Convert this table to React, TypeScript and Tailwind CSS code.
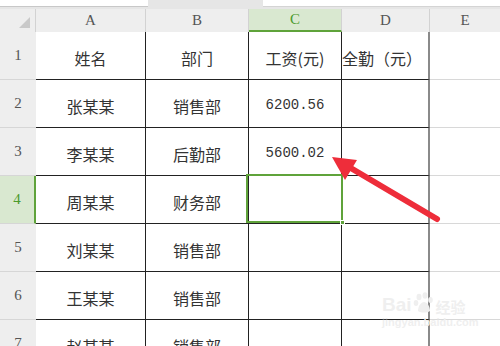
import React from 'react';

const CJK = "font-['Noto_Sans_CJK_SC',sans-serif]";
const SERIF = "font-['Liberation_Serif','Noto_Sans_CJK_SC',serif]";

type Col = { key: string; w: string; line: string };

const COLS: Col[] = [
  { key: 'A', w: 'w-[110px]', line: 'border-r border-[#222]' },
  { key: 'B', w: 'w-[103px]', line: 'border-r border-[#222]' },
  { key: 'C', w: 'w-[93px]', line: 'border-r border-[#222]' },
  { key: 'D', w: 'w-[88px]', line: 'border-r-2 border-r-[#8a8a8a]' },
];

const ROWS: { n: number; cells: string[] }[] = [
  { n: 1, cells: ['姓名', '部门', '工资(元)', '全勤（元）'] },
  { n: 2, cells: ['张某某', '销售部', '6200.56', ''] },
  { n: 3, cells: ['李某某', '后勤部', '5600.02', ''] },
  { n: 4, cells: ['周某某', '财务部', '', ''] },
  { n: 5, cells: ['刘某某', '销售部', '', ''] },
  { n: 6, cells: ['王某某', '销售部', '', ''] },
  { n: 7, cells: ['赵某某', '销售部', '', ''] },
];

function isNumber(s: string) {
  return /^[0-9.]+$/.test(s);
}

export default function App() {
  return (
    <div className="relative h-[346px] w-[500px] overflow-hidden bg-white">
      {/* formula bar remnant */}
      <div className="flex h-[9px] bg-[#e6e6e6]">
        <div className="h-[7px] w-[148px] border-b border-[#c8c8c8] bg-white" />
        <div className="w-[115px]" />
        <div className="h-[7px] flex-1 border-b border-[#d4d4d4] bg-white" />
      </div>

      {/* column headers */}
      <div className={`flex h-[23px] bg-[#eeeeee] text-[15px] text-[#555] ${SERIF}`}>
        <div className="relative w-[36px] border-r border-[#d2d2d2]">
          <svg className="absolute left-[19px] top-[8px]" width="11" height="11" viewBox="0 0 11 11">
            <polygon points="11,0 11,11 0,11" fill="#c9c9c9" />
          </svg>
        </div>
        {COLS.map((c) => (
          <div
            key={c.key}
            className={`${c.w} flex items-center justify-center border-r border-[#d2d2d2] ${
              c.key === 'C'
                ? 'border-b-2 border-b-[#5fa33a] bg-[#d9e8d0] text-[#4b9a2c]'
                : ''
            }`}
          >
            {c.key}
          </div>
        ))}
        <div className="flex w-[70px] items-center justify-center">E</div>
      </div>

      {/* rows */}
      {ROWS.map((r) => (
        <div key={r.n} className="flex h-[48px]">
          <div
            className={`flex w-[36px] items-center justify-center border-b border-[#d6d6d6] text-[15px] ${SERIF} ${
              r.n === 4
                ? 'border-r-2 border-r-[#5fa33a] bg-[#d9e8d0] text-[#4b9a2c]'
                : 'bg-[#eeeeee] text-[#555]'
            }`}
          >
            {r.n}
          </div>
          {COLS.map((c, i) => {
            const v = r.cells[i];
            return (
              <div
                key={c.key}
                className={`${c.w} ${c.line} flex items-center justify-center whitespace-nowrap border-b border-b-[#222] pt-[4px] text-[#333] ${
                  isNumber(v)
                    ? "font-['Liberation_Mono',monospace] text-[14px]"
                    : `${CJK} text-[16px]`
                } ${c.key === 'D' && v ? 'justify-start' : ''}`}
              >
                {v}
              </div>
            );
          })}
          <div className="flex-1 border-b border-[#d8d8d8]" />
        </div>
      ))}

      {/* active cell C4 */}
      <div className="absolute left-[246px] top-[174px] h-[49px] w-[97px] border-2 border-[#5fa33a]" />
      <div className="absolute left-[340px] top-[220px] h-[5px] w-[5px] border border-white bg-[#5fa33a]" />

      {/* annotation arrow */}
      <svg className="absolute left-0 top-0" width="500" height="346" viewBox="0 0 500 346">
        <line x1="437" y1="219" x2="349" y2="167" stroke="#ee2d3a" strokeWidth="6" strokeLinecap="round" />
        <polygon points="332,157 357,160 345,180" fill="#ee2d3a" />
      </svg>

      {/* watermark */}
      <div className="absolute left-[382px] top-[292px] flex flex-col text-[#efefef]">
        <div className="flex items-end gap-[1px] leading-none">
          <span className="font-['Liberation_Sans',sans-serif] text-[19px] font-bold">Bai</span>
          <svg width="22" height="22" viewBox="0 0 22 22">
            <g fill="#efefef">
              <ellipse cx="6" cy="5" rx="2.5" ry="3.2" />
              <ellipse cx="12" cy="3.5" rx="2.5" ry="3.2" />
              <ellipse cx="17.5" cy="8" rx="2.3" ry="3" />
              <ellipse cx="3" cy="11" rx="2.3" ry="3" />
              <path d="M5 19 C5 13 9 10 11 10 C14 10 17 14 17 19 C14 21 8 21 5 19 Z" />
            </g>
          </svg>
          <span className={`${CJK} text-[15px] font-bold`}>经验</span>
        </div>
        <div className="mt-[3px] font-['Liberation_Sans',sans-serif] text-[11px] font-bold leading-none">
          jingyan.baidu.com
        </div>
      </div>
    </div>
  );
}
